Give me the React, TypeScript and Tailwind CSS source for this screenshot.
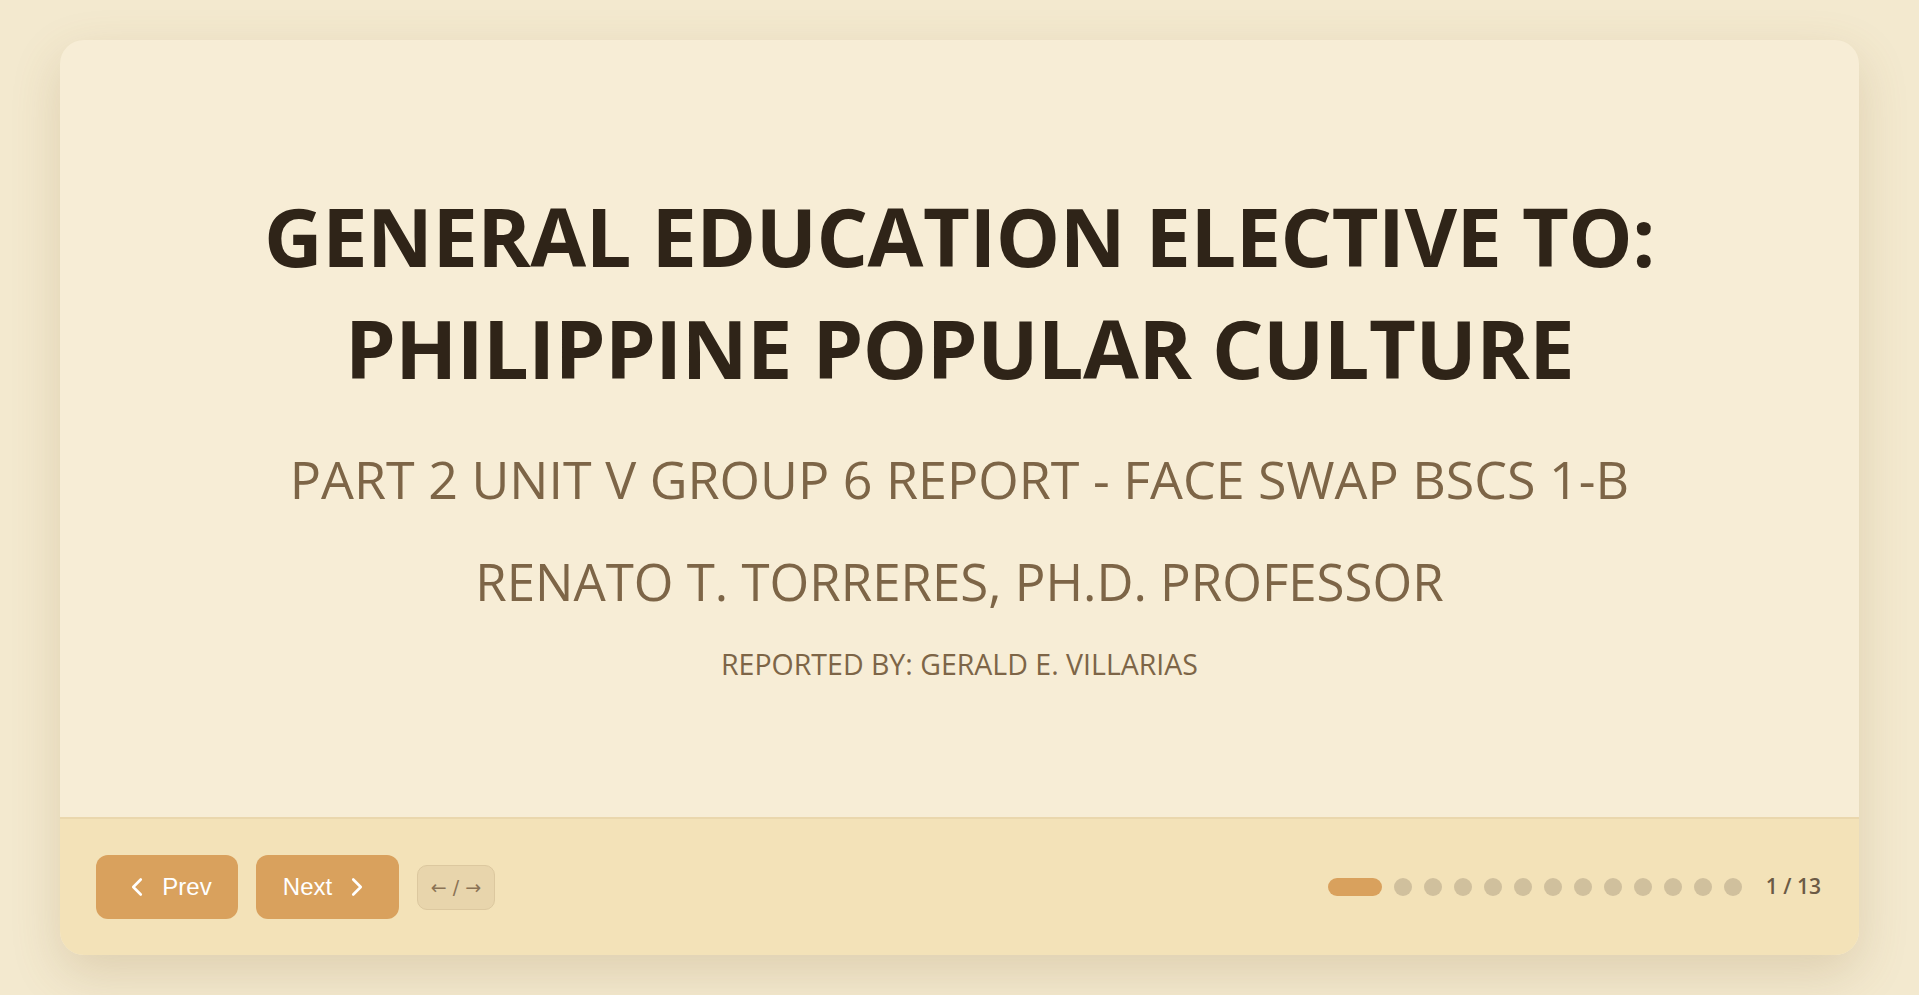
import { ChevronLeft, ChevronRight } from 'lucide-react';

const TOTAL = 13;

export default function App() {
  const current = 0;

  return (
    <div className="flex h-screen w-full bg-[#f3e9cf] px-[60px] py-10 font-['Open_Sans',sans-serif]">
      <div className="flex w-full flex-col overflow-hidden rounded-3xl bg-[#f7edd6] shadow-[0_18px_50px_rgba(140,105,50,0.2)]">
        <main className="flex flex-1 flex-col items-center justify-center px-12 pt-1 text-center">
          <h1 className="text-[81px] leading-[112px] font-bold tracking-[-0.5px] text-[#2f2418]">
            GENERAL EDUCATION ELECTIVE TO:
            <br />
            PHILIPPINE POPULAR CULTURE
          </h1>
          <p className="mt-[40px] text-[52px] leading-[70px] font-normal text-[#7d6547]">
            PART 2 UNIT V GROUP 6 REPORT - FACE SWAP BSCS 1-B
          </p>
          <p className="mt-[32px] text-[51px] leading-[70px] font-normal text-[#7d6547]">
            RENATO T. TORRERES, PH.D. PROFESSOR
          </p>
          <p className="mt-[30px] text-[28.5px] leading-[36px] text-[#7d6547]">
            REPORTED BY: GERALD E. VILLARIAS
          </p>
        </main>

        <footer className="flex items-center justify-between border-t-2 border-[#ead7ad] bg-[#f3e2b8] px-9 py-9">
          <div className="flex items-center gap-[18px] font-['Liberation_Sans',sans-serif]">
            <button
              type="button"
              className="inline-flex h-16 w-[142px] items-center justify-center gap-2.5 rounded-xl bg-[#d9a15d] text-2xl text-white"
            >
              <ChevronLeft size={30} strokeWidth={2.1} />
              <span>Prev</span>
            </button>
            <button
              type="button"
              className="inline-flex h-16 w-[143px] items-center justify-center gap-2.5 rounded-xl bg-[#d9a15d] text-2xl text-white"
            >
              <span>Next</span>
              <ChevronRight size={30} strokeWidth={2.1} />
            </button>
            <div className="flex h-[45px] w-[78px] items-center justify-center rounded-[10px] border border-[#dcc89f] bg-[#e8d5ac] font-['DejaVu_Sans',sans-serif] text-[19px] text-[#8b7355]">
              ← / →
            </div>
          </div>

          <div className="flex items-center gap-6">
            <div className="flex items-center gap-3">
              {Array.from({ length: TOTAL }).map((_, i) =>
                i === current ? (
                  <span key={i} className="h-[18px] w-[54px] rounded-full bg-[#d9a15d]" />
                ) : (
                  <span key={i} className="h-[18px] w-[18px] rounded-full bg-[#d0c09d]" />
                )
              )}
            </div>
            <span className="mr-0.5 text-[21px] font-semibold text-[#6b5a45]">
              {current + 1} / {TOTAL}
            </span>
          </div>
        </footer>
      </div>
    </div>
  );
}
